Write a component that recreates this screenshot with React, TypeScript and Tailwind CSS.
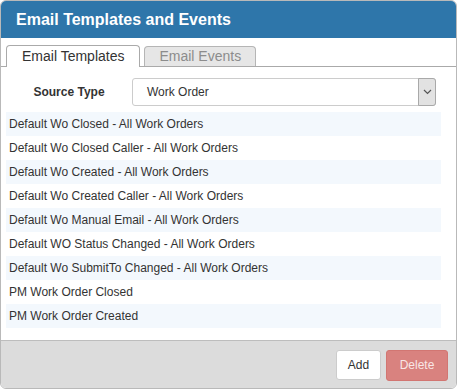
import React from "react";

const items = [
  "Default Wo Closed - All Work Orders",
  "Default Wo Closed Caller - All Work Orders",
  "Default Wo Created - All Work Orders",
  "Default Wo Created Caller - All Work Orders",
  "Default Wo Manual Email - All Work Orders",
  "Default WO Status Changed - All Work Orders",
  "Default Wo SubmitTo Changed - All Work Orders",
  "PM Work Order Closed",
  "PM Work Order Created",
];

export default function App() {
  return (
    <div
      className="w-[457px] h-[389px] bg-white border border-[#b9b9b9] rounded-[6px] overflow-hidden flex flex-col text-[#333]"
      style={{ fontFamily: '"Liberation Sans", Arial, sans-serif' }}
    >
      <div className="h-[37px] shrink-0 bg-[#2e76aa] flex items-center px-[15px] text-white font-bold text-[16px]">
        Email Templates and Events
      </div>
      <div className="h-[1px] shrink-0 bg-white" />
      <div className="flex-1 flex flex-col bg-white">
        <div className="flex items-end gap-[4px] px-[5px] pt-[6px] border-b border-[#aaa] h-[28px] shrink-0">
          <div className="h-[22px] -mb-[1px] bg-white border border-b-0 border-[#aaa] rounded-t-[4px] px-[15px] flex items-center text-[14px] text-[#333]">
            Email Templates
          </div>
          <div className="h-[20px] bg-[#e6e6e6] border border-b-0 border-[#b5b5b5] rounded-t-[4px] px-[14px] flex items-center text-[14px] text-[#8c8c8c]">
            Email Events
          </div>
        </div>
        <div className="flex items-center mt-[11px] h-[28px]">
          <div className="w-[131px] pl-[5px] text-center font-bold text-[12px] text-[#333]">Source Type</div>
          <div className="w-[304px] h-[28px] border border-[#ccc] rounded-[3px] flex items-center justify-between">
            <span className="pl-[14px] text-[12px] text-[#333]">Work Order</span>
            <div className="w-[18px] h-[28px] -mr-[1px] border border-[#a9a9a9] bg-[#e2e2e2] rounded-r-[3px] flex items-center justify-center">
              <svg width="9" height="6" viewBox="0 0 9 6">
                <path d="M1 1 L4.5 4.5 L8 1" fill="none" stroke="#555" strokeWidth="1.2" />
              </svg>
            </div>
          </div>
        </div>
        <div className="mt-[6px] ml-[5px] w-[435px] flex flex-col">
          {items.map((t, i) => (
            <div
              key={t}
              className={`h-[24px] flex items-center pl-[3px] text-[12px] text-[#333] ${i % 2 === 0 ? "bg-[#f3f8fd]" : "bg-white"}`}
            >
              {t}
            </div>
          ))}
        </div>
      </div>
      <div className="h-[48px] shrink-0 bg-[#dcdcdc] border-t border-[#bdbdbd] flex items-center justify-end gap-[5px] pr-[8px] pt-[1px]">
        <button className="w-[45px] h-[30px] bg-white border border-[#ccc] rounded-[3px] text-[12px] text-[#333] flex items-center justify-center">
          Add
        </button>
        <button className="w-[62px] h-[31px] bg-[#d9827f] border border-[#d27672] rounded-[3px] text-[12px] text-[#f8e6e6] flex items-center justify-center">
          Delete
        </button>
      </div>
    </div>
  );
}
